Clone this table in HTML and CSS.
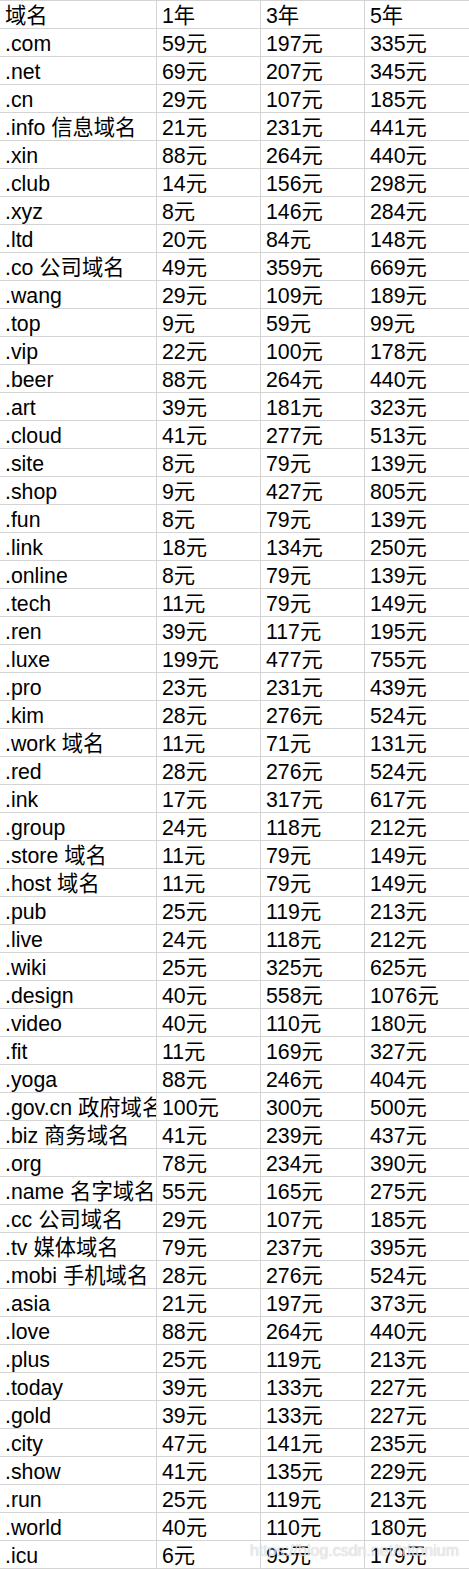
FILE: index.html
```html
<!DOCTYPE html>
<html lang="zh-CN">
<head>
<meta charset="utf-8">
<title>域名价格</title>
<link rel="stylesheet" href="styles.css">
</head>
<body>
<div class="sheet">
<div class="row"><div class="c">域名</div><div class="c">1年</div><div class="c">3年</div><div class="c">5年</div></div>
<div class="row"><div class="c">.com</div><div class="c">59元</div><div class="c">197元</div><div class="c">335元</div></div>
<div class="row"><div class="c">.net</div><div class="c">69元</div><div class="c">207元</div><div class="c">345元</div></div>
<div class="row"><div class="c">.cn</div><div class="c">29元</div><div class="c">107元</div><div class="c">185元</div></div>
<div class="row"><div class="c">.info 信息域名</div><div class="c">21元</div><div class="c">231元</div><div class="c">441元</div></div>
<div class="row"><div class="c">.xin</div><div class="c">88元</div><div class="c">264元</div><div class="c">440元</div></div>
<div class="row"><div class="c">.club</div><div class="c">14元</div><div class="c">156元</div><div class="c">298元</div></div>
<div class="row"><div class="c">.xyz</div><div class="c">8元</div><div class="c">146元</div><div class="c">284元</div></div>
<div class="row"><div class="c">.ltd</div><div class="c">20元</div><div class="c">84元</div><div class="c">148元</div></div>
<div class="row"><div class="c">.co 公司域名</div><div class="c">49元</div><div class="c">359元</div><div class="c">669元</div></div>
<div class="row"><div class="c">.wang</div><div class="c">29元</div><div class="c">109元</div><div class="c">189元</div></div>
<div class="row"><div class="c">.top</div><div class="c">9元</div><div class="c">59元</div><div class="c">99元</div></div>
<div class="row"><div class="c">.vip</div><div class="c">22元</div><div class="c">100元</div><div class="c">178元</div></div>
<div class="row"><div class="c">.beer</div><div class="c">88元</div><div class="c">264元</div><div class="c">440元</div></div>
<div class="row"><div class="c">.art</div><div class="c">39元</div><div class="c">181元</div><div class="c">323元</div></div>
<div class="row"><div class="c">.cloud</div><div class="c">41元</div><div class="c">277元</div><div class="c">513元</div></div>
<div class="row"><div class="c">.site</div><div class="c">8元</div><div class="c">79元</div><div class="c">139元</div></div>
<div class="row"><div class="c">.shop</div><div class="c">9元</div><div class="c">427元</div><div class="c">805元</div></div>
<div class="row"><div class="c">.fun</div><div class="c">8元</div><div class="c">79元</div><div class="c">139元</div></div>
<div class="row"><div class="c">.link</div><div class="c">18元</div><div class="c">134元</div><div class="c">250元</div></div>
<div class="row"><div class="c">.online</div><div class="c">8元</div><div class="c">79元</div><div class="c">139元</div></div>
<div class="row"><div class="c">.tech</div><div class="c">11元</div><div class="c">79元</div><div class="c">149元</div></div>
<div class="row"><div class="c">.ren</div><div class="c">39元</div><div class="c">117元</div><div class="c">195元</div></div>
<div class="row"><div class="c">.luxe</div><div class="c">199元</div><div class="c">477元</div><div class="c">755元</div></div>
<div class="row"><div class="c">.pro</div><div class="c">23元</div><div class="c">231元</div><div class="c">439元</div></div>
<div class="row"><div class="c">.kim</div><div class="c">28元</div><div class="c">276元</div><div class="c">524元</div></div>
<div class="row"><div class="c">.work 域名</div><div class="c">11元</div><div class="c">71元</div><div class="c">131元</div></div>
<div class="row"><div class="c">.red</div><div class="c">28元</div><div class="c">276元</div><div class="c">524元</div></div>
<div class="row"><div class="c">.ink</div><div class="c">17元</div><div class="c">317元</div><div class="c">617元</div></div>
<div class="row"><div class="c">.group</div><div class="c">24元</div><div class="c">118元</div><div class="c">212元</div></div>
<div class="row"><div class="c">.store 域名</div><div class="c">11元</div><div class="c">79元</div><div class="c">149元</div></div>
<div class="row"><div class="c">.host 域名</div><div class="c">11元</div><div class="c">79元</div><div class="c">149元</div></div>
<div class="row"><div class="c">.pub</div><div class="c">25元</div><div class="c">119元</div><div class="c">213元</div></div>
<div class="row"><div class="c">.live</div><div class="c">24元</div><div class="c">118元</div><div class="c">212元</div></div>
<div class="row"><div class="c">.wiki</div><div class="c">25元</div><div class="c">325元</div><div class="c">625元</div></div>
<div class="row"><div class="c">.design</div><div class="c">40元</div><div class="c">558元</div><div class="c">1076元</div></div>
<div class="row"><div class="c">.video</div><div class="c">40元</div><div class="c">110元</div><div class="c">180元</div></div>
<div class="row"><div class="c">.fit</div><div class="c">11元</div><div class="c">169元</div><div class="c">327元</div></div>
<div class="row"><div class="c">.yoga</div><div class="c">88元</div><div class="c">246元</div><div class="c">404元</div></div>
<div class="row"><div class="c">.gov.cn 政府域名</div><div class="c">100元</div><div class="c">300元</div><div class="c">500元</div></div>
<div class="row"><div class="c">.biz 商务域名</div><div class="c">41元</div><div class="c">239元</div><div class="c">437元</div></div>
<div class="row"><div class="c">.org</div><div class="c">78元</div><div class="c">234元</div><div class="c">390元</div></div>
<div class="row"><div class="c">.name 名字域名</div><div class="c">55元</div><div class="c">165元</div><div class="c">275元</div></div>
<div class="row"><div class="c">.cc 公司域名</div><div class="c">29元</div><div class="c">107元</div><div class="c">185元</div></div>
<div class="row"><div class="c">.tv 媒体域名</div><div class="c">79元</div><div class="c">237元</div><div class="c">395元</div></div>
<div class="row"><div class="c">.mobi 手机域名</div><div class="c">28元</div><div class="c">276元</div><div class="c">524元</div></div>
<div class="row"><div class="c">.asia</div><div class="c">21元</div><div class="c">197元</div><div class="c">373元</div></div>
<div class="row"><div class="c">.love</div><div class="c">88元</div><div class="c">264元</div><div class="c">440元</div></div>
<div class="row"><div class="c">.plus</div><div class="c">25元</div><div class="c">119元</div><div class="c">213元</div></div>
<div class="row"><div class="c">.today</div><div class="c">39元</div><div class="c">133元</div><div class="c">227元</div></div>
<div class="row"><div class="c">.gold</div><div class="c">39元</div><div class="c">133元</div><div class="c">227元</div></div>
<div class="row"><div class="c">.city</div><div class="c">47元</div><div class="c">141元</div><div class="c">235元</div></div>
<div class="row"><div class="c">.show</div><div class="c">41元</div><div class="c">135元</div><div class="c">229元</div></div>
<div class="row"><div class="c">.run</div><div class="c">25元</div><div class="c">119元</div><div class="c">213元</div></div>
<div class="row"><div class="c">.world</div><div class="c">40元</div><div class="c">110元</div><div class="c">180元</div></div>
<div class="row"><div class="c">.icu</div><div class="c">6元</div><div class="c">95元</div><div class="c">179元</div></div>
</div>
<div class="watermark">https://blog.csdn.net/tritonium</div>
</body>
</html>
```
FILE: styles.css
```css
html, body {
  margin: 0;
  padding: 0;
  background: #ffffff;
}
body {
  position: relative;
  width: 469px;
  height: 1569px;
  overflow: hidden;
  font-family: "Liberation Sans", "Noto Sans CJK SC", sans-serif;
  font-size: 21.3px;
  color: #000000;
}
.sheet {
  display: flex;
  flex-direction: column;
  border-top: 1px solid #d4d4d4;
}
.row {
  display: grid;
  grid-template-columns: 157px 104px 104px 104px;
  height: 28px;
}
.c {
  box-sizing: border-box;
  height: 28px;
  padding: 4px 0 0 5px;
  border-right: 1px solid #d4d4d4;
  border-bottom: 1px solid #d4d4d4;
  line-height: 23px;
  white-space: nowrap;
  overflow: hidden;
}
.c:last-child {
  border-right: none;
}
.watermark {
  position: absolute;
  left: 250px;
  top: 1542px;
  font-size: 16px;
  line-height: 18px;
  color: rgba(255, 255, 255, 0.7);
  text-shadow: 0 0 1px rgba(120, 120, 120, 0.55);
  white-space: nowrap;
}
```
